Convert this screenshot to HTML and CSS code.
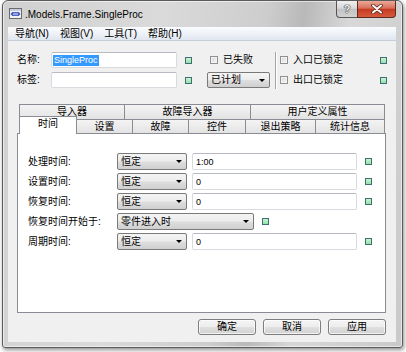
FILE: index.html
```html
<!DOCTYPE html>
<html>
<head>
<meta charset="utf-8">
<link rel="stylesheet" href="styles.css">
</head>
<body>
<div class="window">
  <div class="titlebar">
    <svg class="appicon" viewBox="0 0 13 13" width="13" height="13">
      <rect x="0.5" y="1.5" width="12" height="10" fill="#f2f2f2" stroke="#6a6a6a"/>
      <rect x="1" y="2" width="11" height="2" fill="#c6cfdf"/>
      <rect x="3" y="5" width="7" height="4" fill="#5566c8"/>
      <path d="M1.5 7 L3.5 5 L3.5 9 Z M11.5 7 L9.5 5 L9.5 9 Z" fill="#3e4fb0"/>
      <path d="M4 7 H9" stroke="#dfe4ff" stroke-width="1"/>
    </svg>
    <span class="title">.Models.Frame.SingleProc</span>
    <div class="caps">
      <div class="cbtn help">?</div>
      <div class="cbtn close">
        <svg viewBox="0 0 12 10" width="12" height="10">
          <path d="M2 1.5 L10 8.5 M10 1.5 L2 8.5" stroke="#5a2418" stroke-width="3.6" stroke-linecap="round"/>
          <path d="M2 1.5 L10 8.5 M10 1.5 L2 8.5" stroke="#ffffff" stroke-width="2" stroke-linecap="round"/>
        </svg>
      </div>
    </div>
  </div>
  <div class="client">
    <div class="menubar">
      <span>导航(N)</span>
      <span>视图(V)</span>
      <span>工具(T)</span>
      <span>帮助(H)</span>
    </div>

    <div class="top">
      <div class="idgrid">
        <span class="lbl">名称:</span>
        <div class="input"><span class="hl">SingleProc</span></div>
        <i class="gsq"></i>
        <span class="lbl">标签:</span>
        <div class="input"></div>
        <i class="gsq"></i>
      </div>
      <div class="midcol">
        <div class="chk indent"><i class="box"></i><span>已失败</span></div>
        <div class="combo"><span>已计划</span><i class="arr"></i></div>
      </div>
      <div class="sep"></div>
      <div class="rightcol">
        <div class="chk"><i class="box"></i><span>入口已锁定</span></div>
        <i class="gsq"></i>
        <div class="chk"><i class="box"></i><span>出口已锁定</span></div>
        <i class="gsq"></i>
      </div>
    </div>

    <div class="tabs">
      <div class="tabrow back">
        <div class="tab">导入器</div>
        <div class="tab">故障导入器</div>
        <div class="tab">用户定义属性</div>
      </div>
      <div class="tabrow front">
        <div class="tab active">时间</div>
        <div class="tab">设置</div>
        <div class="tab">故障</div>
        <div class="tab">控件</div>
        <div class="tab">退出策略</div>
        <div class="tab">统计信息</div>
      </div>
    </div>

    <div class="panel">
      <div class="frow">
        <span class="flbl">处理时间:</span>
        <div class="combo c70"><span>恒定</span><i class="arr"></i></div>
        <div class="input i165"><span>1:00</span></div>
        <i class="gsq"></i>
      </div>
      <div class="frow">
        <span class="flbl">设置时间:</span>
        <div class="combo c70"><span>恒定</span><i class="arr"></i></div>
        <div class="input i165"><span>0</span></div>
        <i class="gsq"></i>
      </div>
      <div class="frow">
        <span class="flbl">恢复时间:</span>
        <div class="combo c70"><span>恒定</span><i class="arr"></i></div>
        <div class="input i165"><span>0</span></div>
        <i class="gsq"></i>
      </div>
      <div class="frow">
        <span class="flbl">恢复时间开始于:</span>
        <div class="combo c137"><span>零件进入时</span><i class="arr"></i></div>
        <i class="gsq"></i>
      </div>
      <div class="frow">
        <span class="flbl">周期时间:</span>
        <div class="combo c70"><span>恒定</span><i class="arr"></i></div>
        <div class="input i165"><span>0</span></div>
        <i class="gsq"></i>
      </div>
    </div>

    <div class="btns">
      <div class="btn">确定</div>
      <div class="btn">取消</div>
      <div class="btn">应用</div>
    </div>
  </div>
</div>
</body>
</html>
```
FILE: styles.css
```css
* { box-sizing: border-box; margin: 0; padding: 0; }

body {
  margin: 0;
  width: 406px;
  height: 352px;
  overflow: hidden;
  background: #ffffff;
  font-family: "Liberation Sans", "Noto Sans CJK SC", sans-serif;
  font-size: 10px;
  line-height: 12px;
  color: #000;
}

.window {
  margin-left: 2px;
  width: 401px;
  height: 348px;
  border: 1px solid #5b5b5b;
  border-radius: 6px 6px 3px 3px;
  padding: 0 6px 5px 5px;
  background: linear-gradient(100deg, #d0d0d0 0%, #dadada 35%, #cdcdcd 58%, #b9b9b9 66%, #d8d8d8 76%, #c9c9c9 100%);
  box-shadow: 1px 2px 4px rgba(0, 0, 0, 0.45), inset 0 0 0 1px rgba(255, 255, 255, 0.55);
  display: flex;
  flex-direction: column;
}

.titlebar {
  flex: none;
  height: 26px;
  display: flex;
  align-items: flex-start;
}

.appicon { margin: 6px 0 0 1px; flex: none; }

.title {
  margin: 7px 0 0 3px;
  font-size: 10px;
  line-height: 13px;
  color: #000;
}

.caps { margin-left: auto; display: flex; }

.cbtn {
  height: 17px;
  display: flex;
  align-items: center;
  justify-content: center;
  border: 1px solid #555;
  border-top: none;
}

.help {
  width: 21px;
  border-right: none;
  border-radius: 0 0 0 4px;
  background: linear-gradient(#f0f0f0, #d9d9d9 45%, #c3c3c3 52%, #d2d2d2);
  color: #f4f4f4;
  font-weight: bold;
  font-size: 11px;
  line-height: 12px;
  text-shadow: 0 0 1px #333, 0 0 1px #333, 0 0 1px #333;
}

.close {
  width: 39px;
  border-color: #5e2a20;
  border-radius: 0 0 4px 0;
  background: linear-gradient(#eba999, #d8705b 45%, #c53b22 52%, #d75a3c);
}

.client {
  flex: 1;
  background: #f0f0f0;
  display: flex;
  flex-direction: column;
}

.menubar {
  flex: none;
  height: 14px;
  display: flex;
  gap: 11px;
  padding-left: 7px;
  align-items: center;
  background: linear-gradient(#fbfcfe 0%, #eef2f8 50%, #e0e6ef 100%);
  border-bottom: 1px solid #c6ceda;
}

.menubar span { line-height: 12px; }

/* top section */
.top {
  flex: none;
  display: flex;
  align-items: flex-start;
  padding: 11px 9px 0 9px;
}

.idgrid {
  display: grid;
  grid-template-columns: 34px 126px 15px;
  grid-auto-rows: 16px;
  row-gap: 4px;
  align-items: center;
}

.idgrid .gsq { justify-self: end; }

.midcol {
  margin-left: 15px;
  width: 63px;
  display: grid;
  grid-auto-rows: 16px;
  row-gap: 4px;
  align-items: center;
}

.sep {
  margin-left: 5px;
  width: 2px;
  height: 37px;
  border-left: 1px solid #a3a3a3;
  border-right: 1px solid #ffffff;
}

.rightcol {
  margin-left: 3px;
  flex: 1;
  display: grid;
  grid-template-columns: 1fr 7px;
  grid-auto-rows: 16px;
  row-gap: 4px;
  align-items: center;
}

.chk {
  display: flex;
  align-items: center;
  gap: 5px;
}

.chk.indent { padding-left: 3px; }

.box {
  display: block;
  width: 8px;
  height: 8px;
  border: 1px solid #8e8f8f;
  background: linear-gradient(135deg, #d6d6d6, #f7f7f7);
  box-shadow: inset 0 0 0 1px #f4f4f4;
}

.gsq {
  display: block;
  flex: none;
  width: 7px;
  height: 7px;
  border: 1px solid #3f6f74;
  background: linear-gradient(#c6f4d0, #94e2a8);
}

.input {
  height: 16px;
  background: #fff;
  border: 1px solid #d7dadf;
  border-top-color: #b7bbc1;
  border-radius: 2px;
  display: flex;
  align-items: center;
  padding-left: 1px;
  font-size: 9px;
}

.hl {
  background: #3399ff;
  color: #fff;
  line-height: 11px;
  padding: 0 1px;
}

.combo {
  height: 16px;
  border: 1px solid #7a7a7a;
  border-radius: 2px;
  background: linear-gradient(#f4f4f4 0%, #ececec 48%, #dedede 52%, #d0d0d0 100%);
  display: flex;
  align-items: center;
  padding: 0 4px 0 3px;
}

.combo span { flex: 1; }

.arr {
  display: block;
  width: 0;
  height: 0;
  border-left: 3px solid transparent;
  border-right: 3px solid transparent;
  border-top: 3px solid #000;
}

/* tabs */
.tabs {
  flex: none;
  margin: 15px 10px 0 9px;
}

.tabrow {
  display: flex;
  padding-left: 2px;
}

.back { height: 15px; }
.front { height: 14px; }

.tab {
  flex: none;
  display: flex;
  align-items: center;
  justify-content: center;
  border: 1px solid #898c95;
  border-bottom: none;
  margin-left: -1px;
  background: linear-gradient(#f4f4f4, #e3e3e3);
}

.tab:first-child { margin-left: 0; }

.back .tab:nth-child(1) { width: 106px; }
.back .tab:nth-child(2) { width: 127px; }
.back .tab:nth-child(3) { width: 135px; }

.front .tab:nth-child(1) { width: 58px; }
.front .tab:nth-child(2) { width: 57px; }
.front .tab:nth-child(3) { width: 57px; }
.front .tab:nth-child(4) { width: 58px; }
.front .tab:nth-child(5) { width: 71px; }
.front .tab:nth-child(6) { width: 70px; }

.front .tab.active {
  position: relative;
  z-index: 1;
  background: #fff;
  margin-top: -3px;
  height: 18px;
  padding-bottom: 3px;
}

/* panel */
.panel {
  flex: none;
  height: 180px;
  margin: 0 10px 0 9px;
  border: 1px solid #898c95;
  background: #fff;
  padding: 19px 0 0 10px;
}

.frow {
  display: flex;
  align-items: center;
  height: 17px;
  margin-bottom: 3px;
}

.flbl { width: 89px; flex: none; }

.c70 { width: 70px; height: 17px; flex: none; }
.c137 { width: 137px; height: 17px; flex: none; }

.i165 {
  width: 165px;
  height: 17px;
  margin-left: 5px;
  padding-left: 3px;
}

.frow .gsq { margin-left: 8px; }

/* buttons */
.btns {
  flex: none;
  display: flex;
  justify-content: flex-end;
  gap: 7px;
  margin: 6px 10px 0 0;
}

.btn {
  width: 58px;
  height: 16px;
  border: 1px solid #7d7d7d;
  border-radius: 3px;
  background: linear-gradient(#f5f5f5 0%, #ededed 48%, #dfdfdf 52%, #d2d2d2 100%);
  display: flex;
  align-items: center;
  justify-content: center;
  box-shadow: inset 0 0 0 1px rgba(255, 255, 255, 0.7);
}
```
